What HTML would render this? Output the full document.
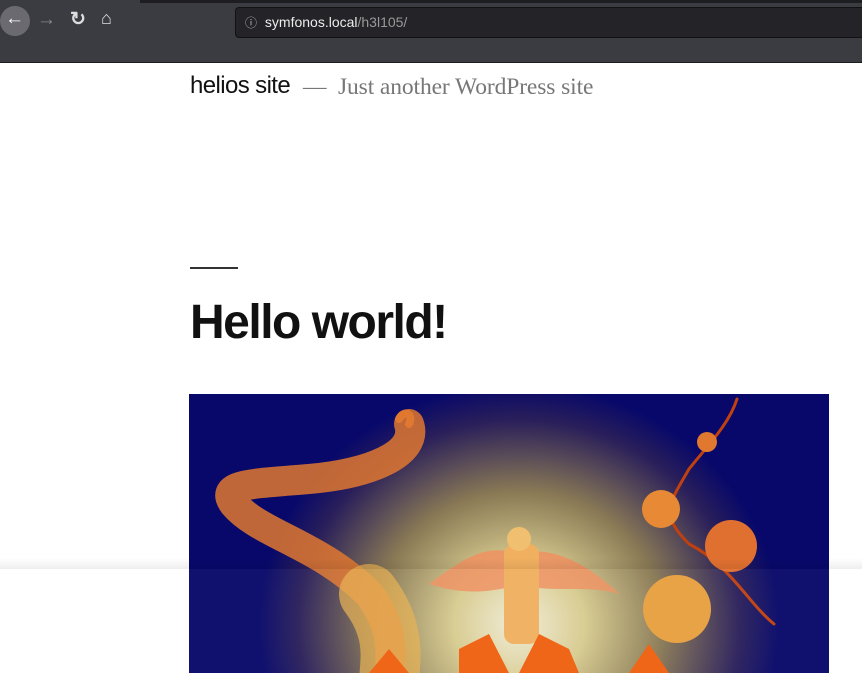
<!DOCTYPE html>
<html><head><meta charset="utf-8"><style>
body{margin:0;width:862px;height:673px;overflow:hidden;background:#fff;position:relative;font-family:"Liberation Sans",sans-serif}
.bar{position:absolute;left:0;top:0;width:862px;height:62px;background:#3b3c42;border-bottom:1px solid #1c1c1f}
.topstrip{position:absolute;left:140px;top:0;width:722px;height:3px;background:#1e1e22}
.url{position:absolute;left:235px;top:7px;width:640px;height:29px;background:#232328;border:1px solid #121214;border-radius:4px;color:#ececec;font-size:14px;line-height:29px}
.back{position:absolute;left:0;top:6px;width:30px;height:30px;border-radius:50%;background:#6a6a70}
.ico{position:absolute;color:#ddd;font-size:19px;font-weight:bold}
.title{position:absolute;left:190px;top:72px;font-size:24px;color:#111;letter-spacing:-0.6px}
.tag{position:absolute;left:303px;top:74px;font-family:"Liberation Serif",serif;font-size:23.5px;color:#777;letter-spacing:-0.1px}
.rule{position:absolute;left:190px;top:267px;width:48px;height:2px;background:#333}
h1{position:absolute;left:190px;top:295px;margin:0;font-size:48px;font-weight:bold;color:#111;letter-spacing:-1.5px}
.img{position:absolute;left:189px;top:394px;width:640px;height:279px;overflow:hidden;background:radial-gradient(ellipse 260px 240px at 330px 230px,#f0ecd8 0%,#d8cc90 25%,#8a7a55 55%,#2a1f5a 85%,#07086a 100%)}
.shade{position:absolute;left:0;top:558px;width:862px;height:11px;background:linear-gradient(#fff0,#0001)}
.low{position:absolute;left:0;top:569px;width:862px;height:104px;background:rgba(255,255,255,0.04)}
</style></head><body>
<div class="bar"><div class="topstrip"></div>
<div class="back"></div><div class="ico" style="left:5px;top:8px;color:#fff">←</div>
<div class="ico" style="left:37px;top:9px;color:#888">→</div>
<div class="ico" style="left:70px;top:8px">↻</div>
<div class="ico" style="left:101px;top:8px;font-size:18px">⌂</div>
<div class="url"><span style="margin-left:9px;color:#bbb;font-size:12px">ⓘ</span> <span style="margin-left:4px">symfonos.local</span><span style="color:#999">/h3l105/</span></div>
</div>
<div class="title">helios site</div>
<div class="tag">—&nbsp; Just another WordPress site</div>
<div class="rule"></div>
<h1>Hello world!</h1>
<div class="img">
<svg width="640" height="279" viewBox="0 0 640 279">
<g fill="none" stroke-linecap="round">
<path d="M220 30 C230 60 180 80 120 85 C60 90 30 90 45 110 C70 140 130 150 180 200 C210 240 200 270 200 290" stroke="#e07830" stroke-width="30" opacity=".85"/>
<path d="M220 30 C225 20 215 15 210 25" stroke="#e07830" stroke-width="8"/>
<path d="M180 200 C210 240 200 270 200 290" stroke="#e8b050" stroke-width="60" opacity=".7"/>
<path d="M548 5 C540 30 520 50 500 75 C480 110 470 120 500 150 C540 170 560 210 585 230" stroke="#c04010" stroke-width="3"/>
</g>
<circle cx="518" cy="48" r="10" fill="#e07830"/>
<circle cx="472" cy="115" r="19" fill="#e88a35"/>
<circle cx="542" cy="152" r="26" fill="#e07030"/>
<circle cx="488" cy="215" r="34" fill="#e8a040"/>
<path d="M240 190 C280 160 300 150 330 160 C360 150 400 170 430 200 C400 190 360 200 330 190 C300 200 270 200 240 190Z" fill="#f09060" opacity=".85"/>
<rect x="315" y="150" width="35" height="100" rx="10" fill="#f0b060"/>
<circle cx="330" cy="145" r="12" fill="#f0c070"/>
<path d="M270 255 L300 240 L320 279 L270 279Z M330 279 L350 240 L380 255 L390 279Z M440 279 L460 250 L480 279Z M180 279 L200 255 L220 279Z" fill="#f06010"/>
</svg>
</div>
<div class="shade"></div><div class="low"></div>
</body></html>
